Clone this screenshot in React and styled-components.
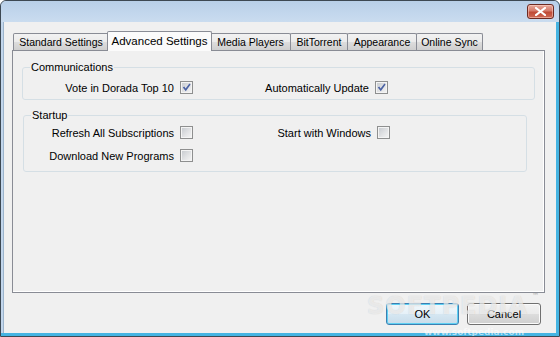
import React from 'react';
import styled, { createGlobalStyle } from 'styled-components';

const Global = createGlobalStyle`
  html, body {
    margin: 0;
    padding: 0;
    background: #ffffff;
  }
  body {
    font-family: "Liberation Sans", Arial, sans-serif;
    font-size: 11px;
    color: #000;
  }
`;

const Window = styled.div`
  position: relative;
  box-sizing: border-box;
  width: 560px;
  height: 337px;
  display: flex;
  flex-direction: column;
  border: 1px solid #3d4853;
  border-radius: 6px 6px 0 0;
  padding: 0 3px 3px 3px;
  background: #c2d6ec;
  box-shadow: inset -3px -3px 0 #45b4e2;
  overflow: hidden;
`;

const TitleBar = styled.div`
  height: 21px;
  margin: 0 -3px;
  display: flex;
  justify-content: flex-end;
  align-items: flex-start;
  padding: 3px 5px 0 0;
  box-sizing: border-box;
  background: linear-gradient(to bottom, #b8cfe8 0%, #c3d7ed 60%, #cadcef 100%);
  border-radius: 5px 5px 0 0;
`;

const CloseButton = styled.div`
  width: 27px;
  height: 15px;
  box-sizing: border-box;
  border: 1px solid #6d2a22;
  border-radius: 3px;
  background: linear-gradient(to bottom, #e9a99b 0%, #d47a6a 45%, #bf4a36 55%, #cf6a55 100%);
  box-shadow: inset 0 0 0 1px rgba(255, 220, 210, 0.5);
  display: flex;
  align-items: center;
  justify-content: center;
`;

const Client = styled.div`
  flex: 1;
  display: flex;
  flex-direction: column;
  background: #f0f0f0;
  padding: 9px 11px 8px 8px;
  border-left: 1px solid #9cb4cc;
  margin-left: -1px;
`;

const TabRow = styled.div`
  display: flex;
  align-items: flex-end;
  height: 19px;
  padding-left: 1px;
`;

const Tab = styled.div`
  position: relative;
  box-sizing: border-box;
  flex: none;
  width: ${({ w }) => w}px;
  height: ${({ active }) => (active ? 20 : 17)}px;
  margin-left: ${({ active }) => (active ? -1 : 0)}px;
  margin-right: ${({ active }) => (active ? -2 : -1)}px;
  margin-bottom: ${({ active }) => (active ? -1 : 0)}px;
  z-index: ${({ active }) => (active ? 2 : 1)};
  border: 1px solid #898c95;
  border-bottom: none;
  border-radius: 2px 2px 0 0;
  background: ${({ active }) =>
    active ? '#fbfbfb' : 'linear-gradient(to bottom, #f2f2f2 0%, #ebebeb 50%, #dddddd 51%, #cfcfcf 100%)'};
  display: flex;
  justify-content: center;
  padding-top: ${({ active }) => (active ? 3 : 2)}px;
  white-space: nowrap;
  font-size: ${({ active }) => (active ? 11.5 : 10.5)}px;
`;

const Panel = styled.div`
  box-sizing: border-box;
  width: 533px;
  height: 243px;
  border: 1px solid #898c95;
  background: #f0f0f0;
  box-shadow: inset -1px -1px 0 #ffffff;
  display: flex;
  flex-direction: column;
`;

const Group = styled.fieldset`
  margin: ${({ top }) => top}px ${({ right }) => right}px 0 ${({ left }) => left}px;
  padding: 0;
  border: 1px solid #d5dfe5;
  border-radius: 3px;
  min-width: 0;
`;

const Legend = styled.legend`
  margin-left: 7px;
  padding: 0 1px;
  line-height: 13px;
  font-size: 11px;
`;

const Grid = styled.div`
  display: grid;
  grid-template-columns: ${({ cols }) => cols};
  row-gap: 10px;
  justify-items: end;
  padding: ${({ pad }) => pad};
`;

const Field = styled.label`
  display: flex;
  align-items: center;
  gap: 6px;
  height: 13px;
  white-space: nowrap;
`;

const Box = styled.span`
  position: relative;
  box-sizing: border-box;
  width: 13px;
  height: 13px;
  border: 1px solid #8e8f8f;
  background: linear-gradient(135deg, #c4c8cd 0%, #e2e3e5 55%, #f6f6f6 100%);
  box-shadow: inset 0 0 0 1px #f4f4f4;
  display: flex;
  align-items: center;
  justify-content: center;
`;

const ButtonRow = styled.div`
  display: flex;
  justify-content: flex-end;
  gap: 8px;
  margin-top: 10px;
  padding-right: 4px;
`;

const Button = styled.div`
  box-sizing: border-box;
  width: ${({ w }) => w}px;
  height: 22px;
  border: 1px solid ${({ primary }) => (primary ? '#3c7fb1' : '#707070')};
  border-radius: 3px;
  background: ${({ primary }) =>
    primary
      ? 'linear-gradient(to bottom, #f0f7fb 0%, #e6f1f8 50%, #d6e7f2 51%, #c8dcea 100%)'
      : 'linear-gradient(to bottom, #f2f2f2 0%, #ebebeb 50%, #dddddd 51%, #cfcfcf 100%)'};
  box-shadow: inset 0 0 0 1px ${({ primary }) => (primary ? '#5ed0f3' : '#fbfbfb')};
  display: flex;
  align-items: center;
  justify-content: center;
  font-size: 11px;
`;

const Watermark = styled.div`
  position: absolute;
  left: 366px;
  top: 291px;
  font-family: "DejaVu Sans", sans-serif;
  font-weight: bold;
  font-size: 24px;
  letter-spacing: 1px;
  color: rgba(255, 255, 255, 0.6);
  text-shadow: 0 0 1px rgba(140, 140, 140, 0.4);
  pointer-events: none;
  sup {
    font-size: 7px;
    font-weight: normal;
    vertical-align: top;
    margin-left: 4px;
    color: rgba(160, 160, 160, 0.6);
  }
`;

const WatermarkUrl = styled.div`
  position: absolute;
  left: 423px;
  top: 326px;
  font-family: "DejaVu Sans", sans-serif;
  font-size: 9px;
  font-weight: bold;
  color: rgba(255, 255, 255, 0.6);
  pointer-events: none;
`;

const Check = () => (
  <svg width="9" height="9" viewBox="0 0 9 9">
    <path d="M0.8 4.6 L2.3 3.6 L3.6 5.4 L7.4 0.6 L8.6 1.4 L3.8 8.2 Z" fill="#4b62a4" />
  </svg>
);

const CheckBox = ({ checked }) => <Box>{checked && <Check />}</Box>;

const Option = ({ label, checked }) => (
  <Field>
    {label}
    <CheckBox checked={checked} />
  </Field>
);

const tabs = [
  { name: 'Standard Settings', w: 96 },
  { name: 'Advanced Settings', w: 105, active: true },
  { name: 'Media Players', w: 81 },
  { name: 'BitTorrent', w: 58 },
  { name: 'Appearance', w: 70 },
  { name: 'Online Sync', w: 67 },
];

export default function App() {
  return (
    <>
      <Global />
      <Window>
        <TitleBar>
          <CloseButton>
            <svg width="11" height="9" viewBox="0 0 11 9">
              <path
                d="M1 1 L10 8 M10 1 L1 8"
                stroke="#ffffff"
                strokeWidth="2.2"
                strokeLinecap="square"
              />
            </svg>
          </CloseButton>
        </TitleBar>
        <Client>
          <TabRow>
            {tabs.map((t) => (
              <Tab key={t.name} w={t.w} active={t.active}>
                {t.name}
              </Tab>
            ))}
          </TabRow>
          <Panel>
            <Group top={10} left={9} right={9}>
              <Legend>Communications</Legend>
              <Grid cols="170px 195px" pad="7px 0 5px 0">
                <Option label="Vote in Dorada Top 10" checked />
                <Option label="Automatically Update" checked />
              </Grid>
            </Group>
            <Group top={9} left={10} right={17}>
              <Legend>Startup</Legend>
              <Grid cols="169px 197px" pad="4px 0 9px 0">
                <Option label="Refresh All Subscriptions" />
                <Option label="Start with Windows" />
                <Option label="Download New Programs" />
              </Grid>
            </Group>
          </Panel>
          <ButtonRow>
            <Button w={73} primary>
              OK
            </Button>
            <Button w={74}>Cancel</Button>
          </ButtonRow>
        </Client>
        <Watermark>
          SOFTPEDIA<sup>™</sup>
        </Watermark>
        <WatermarkUrl>www.softpedia.com</WatermarkUrl>
      </Window>
    </>
  );
}
